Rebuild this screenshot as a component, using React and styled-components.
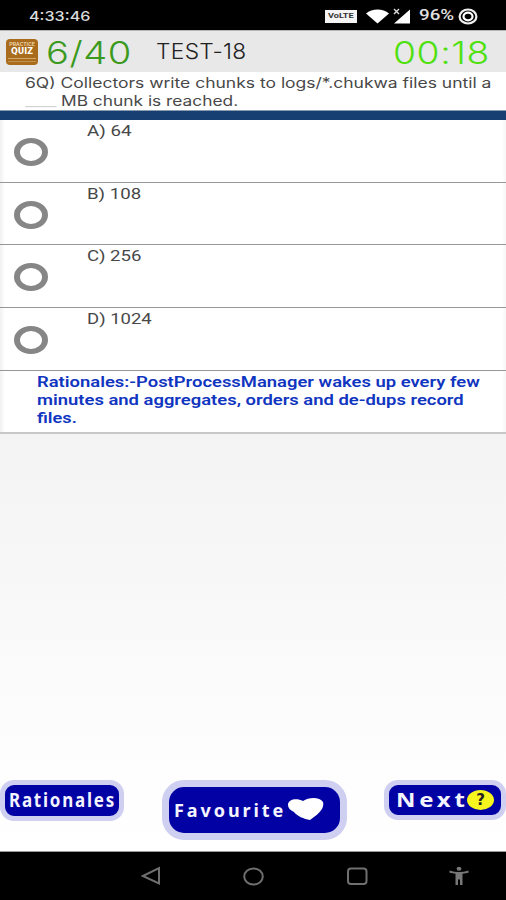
import React, { useLayoutEffect, useRef, useState } from "react";
import styled, { createGlobalStyle } from "styled-components";

const OPTIONS = ["A) 64", "B) 108", "C) 256", "D) 1024"];
const OPTION_WIDTHS = [44, 54, 54, 65];

// The app is shown wider than its natural ratio, so every line is stretched to its width.
const FitText = ({ width, children, ...rest }) => {
  const ref = useRef(null);
  const [scale, setScale] = useState(1);

  useLayoutEffect(() => {
    setScale(width / ref.current.offsetWidth);
  }, [width, children]);

  return (
    <TextBox $width={width} {...rest}>
      <span ref={ref} style={{ transform: `scaleX(${scale})` }}>
        {children}
      </span>
    </TextBox>
  );
};

const App = () => {
  return (
    <>
      <GlobalStyle />
      <Screen>
        <StatusBar>
          <FitText width={61} $size={13.5} $line={18} $weight={500} $color="#dcdcdc" $font="Inter">
            4:33:46
          </FitText>
          <StatusIcons>
            <VolteBadge>
              <FitText width={26} $size={7} $line={13} $weight={700} $color="#333">
                VoLTE
              </FitText>
            </VolteBadge>
            <svg width="23" height="15" viewBox="0 0 23 15">
              <path d="M0 4.5C6 -.8 17 -.8 23 4.5L11.5 14.5Z" fill="#fff" />
            </svg>
            <SignalIcon width="18" height="16" viewBox="0 0 18 16">
              <path d="M1 15.5L17 1.5V15.5Z" fill="#fff" />
              <path d="M1 1L6 6M6 1L1 6" stroke="#ddd" strokeWidth="1.4" />
            </SignalIcon>
            <FitText width={35} $size={14.5} $line={20} $color="#e0e0e0" $weight={500}>
              96%
            </FitText>
            <BatteryIcon width="20" height="17" viewBox="0 0 20 17">
              <ellipse cx="10" cy="8.5" rx="8.4" ry="7" fill="none" stroke="#eee" strokeWidth="2.2" />
              <ellipse cx="10" cy="8.5" rx="4.5" ry="3.8" fill="none" stroke="#fff" strokeWidth="2.2" />
            </BatteryIcon>
          </StatusIcons>
        </StatusBar>

        <Header>
          <Logo>
            <LogoTop>PRACTICE</LogoTop>
            <LogoName>QUIZ</LogoName>
            <LogoLine />
          </Logo>
          <FitText width={86} $size={31.5} $line={43} $weight={350} $color="#3b9a1d" $font="Inter" $spacing={0.4}>
            6/40
          </FitText>
          <Title>
            <FitText width={91} $size={21} $line={42} $weight={300} $color="#222" $font="Inter" $spacing={0.3}>
              TEST-18
            </FitText>
          </Title>
          <Timer>
            <FitText width={97} $size={31.5} $line={43} $weight={350} $color="#4fe010" $font="Inter" $spacing={0.5}>
              00:18
            </FitText>
          </Timer>
        </Header>

        <Question>
          <FitText width={467} $size={14} $line={18} $color="#484848" $font="Inter">
            6Q) Collectors write chunks to logs/*.chukwa files until a
          </FitText>
          <QuestionRow>
            <FitText width={32} $size={14} $line={18} $color="#d2d2d2" $font="Inter">
              ____
            </FitText>
            <FitText width={177} $size={14} $line={18} $color="#484848" $font="Inter">
              MB chunk is reached.
            </FitText>
          </QuestionRow>
        </Question>

        <BlueBar />

        {OPTIONS.map((option, i) => (
          <OptionRow key={option}>
            <Radio />
            <FitText width={OPTION_WIDTHS[i]} $size={14.5} $line={18} $color="#484848">
              {option}
            </FitText>
          </OptionRow>
        ))}

        <RationaleBox>
          <FitText width={443} $size={15} $line={18} $weight={600} $color="#1035c0">
            Rationales:-PostProcessManager wakes up every few
          </FitText>
          <FitText width={427} $size={15} $line={18} $weight={600} $color="#1035c0">
            minutes and aggregates, orders and de-dups record
          </FitText>
          <FitText width={40} $size={15} $line={18} $weight={600} $color="#1035c0">
            files.
          </FitText>
        </RationaleBox>

        <Body>
          <BlueButton $width={124} $height={41} $border={5} $radius={14} $pad={4}>
            <FitText width={107} $size={19} $line={30} $weight={700} $color="#f4f4ff" $font="Noto Sans" $spacing={2}>
              Rationales
            </FitText>
          </BlueButton>
          <BlueButton $width={185} $height={60} $border={7} $radius={22} $pad={5}>
            <FitText width={112} $size={18.5} $line={44} $weight={700} $color="#f4f4ff" $font="Noto Sans" $spacing={3}>
              Favourite
            </FitText>
            <HeartIcon width="37" height="24" viewBox="0 0 37 24">
              <path
                d="M1 8C1 2 10 1 16 4C22 0 33 0 36 5C38 12 30 18 23 23C17 22 10 19 7 15C3 13 1 11 1 8Z"
                fill="#fff"
              />
            </HeartIcon>
          </BlueButton>
          <BlueButton $width={122} $height={40} $border={5} $radius={14} $pad={7}>
            <FitText width={73} $size={19} $line={30} $weight={700} $color="#f4f4ff" $font="Noto Sans" $spacing={3}>
              Next
            </FitText>
            <Help>?</Help>
          </BlueButton>
        </Body>

        <NavBar>
          <svg width="20" height="20" viewBox="0 0 20 20">
            <path d="M18 2.2V17.5L1.8 10Z" />
          </svg>
          <svg width="22" height="20" viewBox="0 0 22 20">
            <ellipse cx="11.5" cy="10.5" rx="9.3" ry="8" />
          </svg>
          <svg width="22" height="20" viewBox="0 0 22 20">
            <rect x="2" y="2.5" width="18.5" height="15.5" rx="3" />
          </svg>
          <svg width="20" height="20" viewBox="0 0 20 20">
            <ellipse cx="10" cy="2.8" rx="2.4" ry="2" fill="#777" stroke="none" />
            <path
              d="M.5 4.5Q10 7.5 19.5 4.5V6.7L13.5 7.8V19H11V13.5H9V19H6.5V7.8L.5 6.7Z"
              fill="#777"
              stroke="none"
            />
          </svg>
        </NavBar>
      </Screen>
    </>
  );
};

export default App;

const GlobalStyle = createGlobalStyle`
  * {
    box-sizing: border-box;
  }
  body {
    margin: 0;
    background: #fff;
    font-family: Roboto, sans-serif;
  }
  svg {
    display: block;
    flex-shrink: 0;
  }
`;

const TextBox = styled.div`
  flex: none;
  width: ${({ $width }) => $width}px;
  height: ${({ $line }) => $line}px;
  line-height: ${({ $line }) => $line}px;
  font-family: ${({ $font }) => ($font ? `"${$font}", ` : "")}Roboto, sans-serif;
  font-size: ${({ $size }) => $size}px;
  font-weight: ${({ $weight }) => $weight ?? 400};
  letter-spacing: ${({ $spacing }) => $spacing ?? 0}px;
  color: ${({ $color }) => $color};
  text-align: left;
  white-space: nowrap;
  span {
    display: inline-block;
    transform-origin: left center;
  }
`;

const Screen = styled.main`
  display: flex;
  flex-direction: column;
  width: 506px;
  height: 900px;
  overflow: hidden;
`;

const StatusBar = styled.div`
  display: flex;
  align-items: center;
  justify-content: space-between;
  height: 30px;
  padding: 2px 28px 0 29px;
  background: #000;
`;

const StatusIcons = styled.div`
  display: flex;
  align-items: center;
`;

const VolteBadge = styled.div`
  width: 32px;
  height: 13px;
  margin-right: 9px;
  padding-left: 3px;
  background: #f4f4f4;
`;

const SignalIcon = styled.svg`
  margin: 0 8px 0 4px;
`;

const BatteryIcon = styled.svg`
  margin-left: 4px;
`;

const Header = styled.header`
  display: flex;
  align-items: center;
  height: 42px;
  padding: 1px 16px 0 6px;
  border-top: 1px solid #b5b5b5;
  background: #e8e8e8;
`;

const Logo = styled.div`
  display: flex;
  flex-direction: column;
  align-items: center;
  width: 32px;
  height: 26px;
  margin-right: 8px;
  padding-top: 2px;
  border-radius: 4px;
  background: #a86c1c;
  color: #fff;
`;

const LogoTop = styled.div`
  font-size: 5.5px;
  line-height: 6px;
  font-weight: 500;
  color: #f0dcb8;
`;

const LogoName = styled.div`
  font-family: "DejaVu Sans", sans-serif;
  font-size: 8px;
  line-height: 9px;
  font-weight: 700;
`;

const LogoLine = styled.div`
  width: 28px;
  height: 4px;
  margin-top: 2px;
  border-top: 1px solid #d1a765;
  border-bottom: 1px solid #c4934b;
`;

const Title = styled.div`
  margin-left: 24px;
`;

const Timer = styled.div`
  margin-left: auto;
`;

const Question = styled.section`
  height: 38px;
  padding: 2px 0 0 25px;
  background: #fff;
`;

const QuestionRow = styled.div`
  display: flex;
  gap: 4px;
`;

const BlueBar = styled.div`
  height: 10px;
  border-top: 1px solid #8b9cae;
  background: #173f72;
`;

const OptionRow = styled.div`
  display: flex;
  height: 62.65px;
  padding: 3px 0 0 14px;
  border-bottom: 1.5px solid #979797;
  background: linear-gradient(90deg, #f1f1f1, #fff 5px calc(100% - 4px), #f6f6f6);
`;

const Radio = styled.div`
  width: 34px;
  height: 28px;
  margin: 15px 39px 0 0;
  border: solid #868686;
  border-width: 5px 6px;
  border-radius: 50%;
`;

const RationaleBox = styled.section`
  height: 63.4px;
  padding: 2px 0 0 37px;
  border-bottom: 2px solid #c8c8c8;
  background: linear-gradient(90deg, #f1f1f1, #fff 5px calc(100% - 4px), #f6f6f6);
`;

const Body = styled.section`
  display: flex;
  flex: 1;
  align-items: flex-start;
  padding: 346px 0 0 0;
  justify-content: space-between;
  border-bottom: 1px solid #999;
  background: linear-gradient(#f3f3f3, #fdfdfd 75%, #fff);
`;

const BlueButton = styled.button`
  display: flex;
  align-items: center;
  width: ${({ $width }) => $width}px;
  height: ${({ $height }) => $height}px;
  padding: 0 0 0 ${({ $pad }) => $pad}px;
  border: ${({ $border }) => $border}px solid #cfcff2;
  border-radius: ${({ $radius }) => $radius}px;
  background: #0202a4;
`;

const HeartIcon = styled.svg`
  margin: -2px 0 0 1px;
`;

const Help = styled.span`
  flex: none;
  width: 27px;
  height: 20px;
  margin-left: -2px;
  border-radius: 50%;
  background: #f6f51d;
  color: #222;
  font: 700 15px/20px "DejaVu Sans", sans-serif;
  text-align: center;
`;

const NavBar = styled.nav`
  display: flex;
  align-items: center;
  justify-content: space-between;
  height: 48px;
  padding: 0 37px 1px 141px;
  background: #000;
  svg {
    fill: none;
    stroke: #6f6f6f;
    stroke-width: 2;
  }
`;
